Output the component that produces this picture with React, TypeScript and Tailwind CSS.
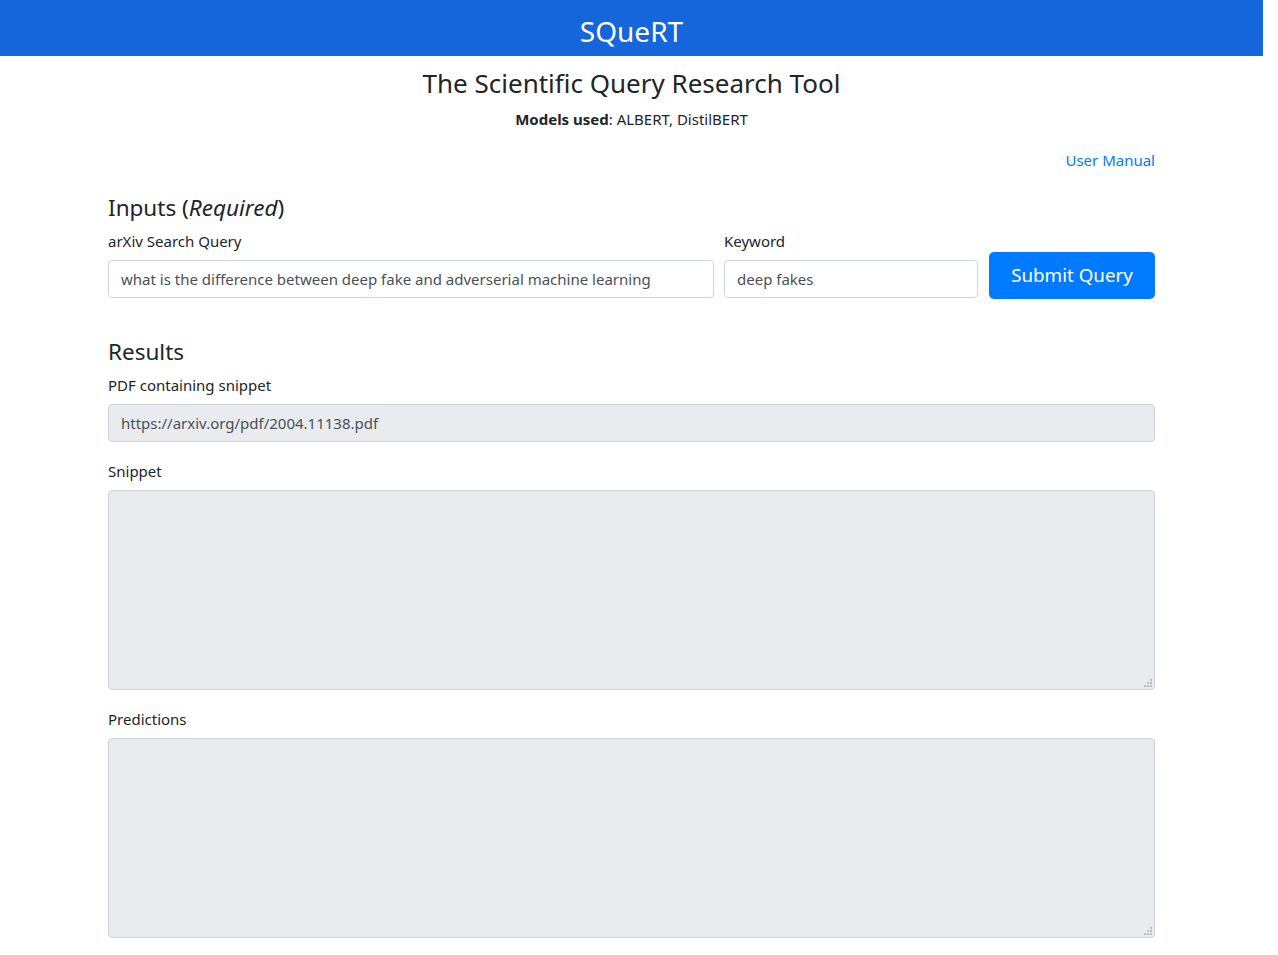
import React from "react";

const font = { fontFamily: '"Noto Sans", "Open Sans", sans-serif' };

export default function App() {
  return (
    <div className="w-[1263px] min-h-[955px] bg-white text-[#212529]" style={font}>
      <header className="h-[56px] bg-[#1565db] flex items-center justify-center pt-[6px]">
        <span className="text-white text-[28px] leading-none">SQueRT</span>
      </header>
      <div className="w-[1047px] mx-auto">
        <h3 className="mt-[11px] text-[26px] leading-[32px] text-center">The Scientific Query Research Tool</h3>
        <p className="mt-[9px] text-[15px] leading-[22px] text-center">
          <b>Models used</b>: ALBERT, DistilBERT
        </p>
        <div className="mt-[18px] flex justify-end text-[15px] leading-[24px]">
          <a className="text-[#007bff]">User Manual</a>
        </div>
        <h4 className="mt-[21px] text-[22.5px] leading-[29px]">
          Inputs (<i>Required</i>)
        </h4>
        <div className="mt-[7px] flex gap-[10px] items-end">
          <div className="w-[606px] flex flex-col">
            <label className="text-[15px] leading-[24px] mb-[7px]">arXiv Search Query</label>
            <div className="h-[38px] border border-[#ced4da] rounded-[4px] px-[12px] flex items-center text-[15px] text-[#495057]">
              what is the difference between deep fake and adverserial machine learning
            </div>
          </div>
          <div className="w-[254px] flex flex-col">
            <label className="text-[15px] leading-[24px] mb-[7px]">Keyword</label>
            <div className="h-[38px] border border-[#ced4da] rounded-[4px] px-[12px] flex items-center text-[15px] text-[#495057]">
              deep fakes
            </div>
          </div>
          <button className="ml-px w-[166px] h-[47px] mb-[-1px] rounded-[5px] bg-[#007bff] text-white text-[18.8px]">
            Submit Query
          </button>
        </div>
        <h4 className="mt-[39px] text-[22.5px] leading-[29px]">Results</h4>
        <label className="block mt-[7px] text-[15px] leading-[24px]">PDF containing snippet</label>
        <div className="mt-[7px] h-[38px] bg-[#e9ecef] border border-[#ced4da] rounded-[4px] px-[12px] flex items-center text-[15px] text-[#495057]">
          https://arxiv.org/pdf/2004.11138.pdf
        </div>
        <label className="block mt-[17px] text-[15px] leading-[24px]">Snippet</label>
        <div className="mt-[7px] h-[200px] bg-[#e9ecef] border border-[#ced4da] rounded-[4px] relative">
          <Grip />
        </div>
        <label className="block mt-[17px] text-[15px] leading-[24px]">Predictions</label>
        <div className="mt-[7px] h-[200px] bg-[#e9ecef] border border-[#ced4da] rounded-[4px] relative">
          <Grip />
        </div>
      </div>
    </div>
  );
}

function Grip() {
  return (
    <svg className="absolute right-[2px] bottom-[2px]" width="8" height="8" viewBox="0 0 8 8">
      <rect x="6" y="0" width="2" height="2" fill="#b8bcc0" />
      <rect x="3" y="3" width="2" height="2" fill="#b8bcc0" />
      <rect x="6" y="3" width="2" height="2" fill="#b8bcc0" />
      <rect x="0" y="6" width="2" height="2" fill="#b8bcc0" />
      <rect x="3" y="6" width="2" height="2" fill="#b8bcc0" />
      <rect x="6" y="6" width="2" height="2" fill="#b8bcc0" />
    </svg>
  );
}
